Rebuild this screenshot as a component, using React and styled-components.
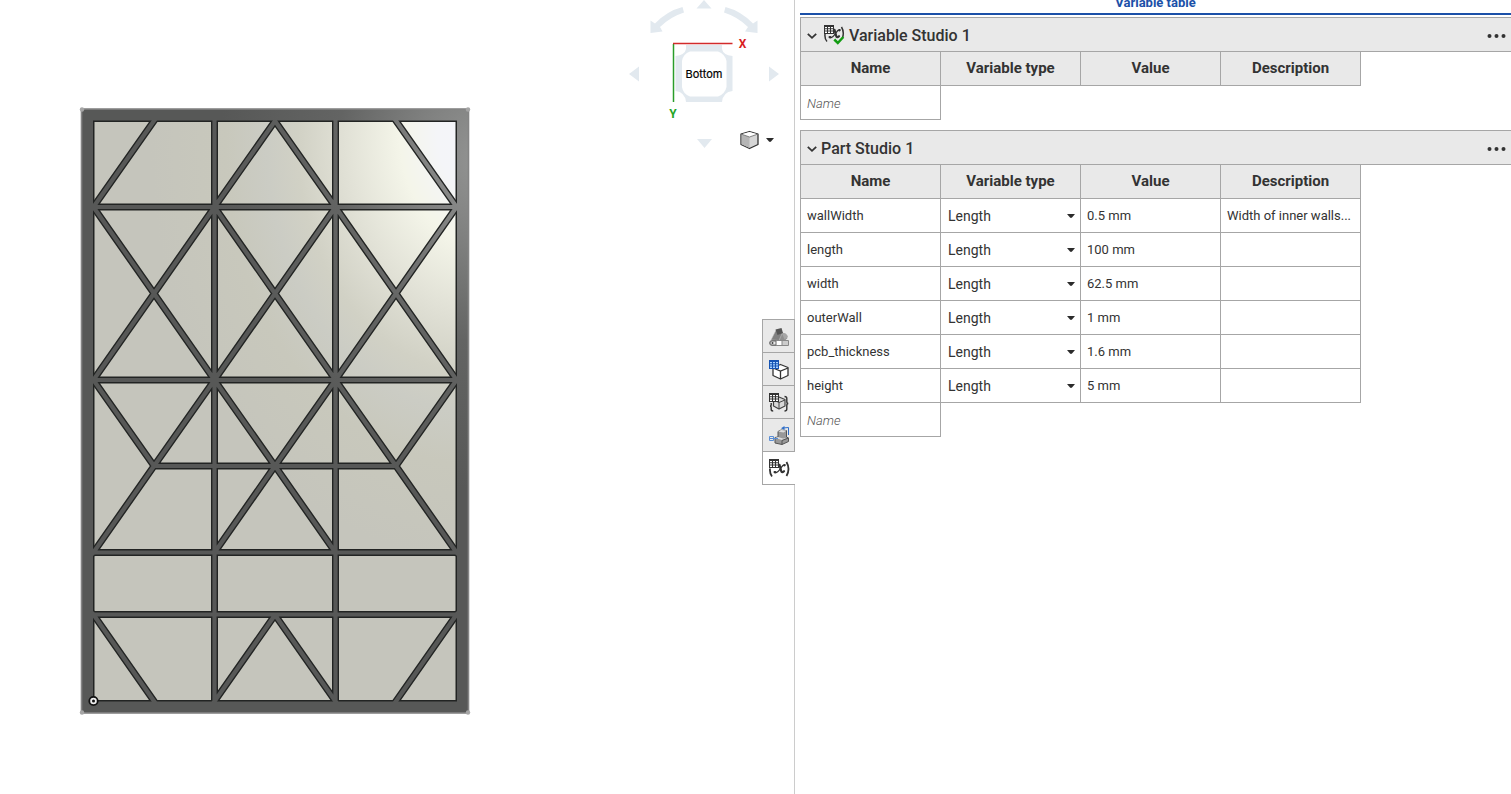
import React from "react";
import styled, { createGlobalStyle } from "styled-components";

const GlobalStyle = createGlobalStyle`
  *, *::before, *::after { box-sizing: border-box; }
  body {
    margin: 0;
    background: #fff;
    color: #333;
    font-family: Roboto, "Liberation Sans", sans-serif;
    font-size: 13px;
  }
  button, input, select { font: inherit; color: inherit; }
`;

const LINE = "#a6a6a6";
const FILL = "#e9e9e9";

const Workspace = styled.div`
  display: grid;
  grid-template-columns: 794fr 717fr;
  min-height: 100vh;
  overflow: hidden;
`;

const Viewport = styled.main`
  display: flex;
  min-width: 0;
`;

const Stage = styled.div`
  flex: 1;
  min-width: 0;
  padding: 106px 0 0 79px;
  overflow: hidden;
`;

const SideTools = styled.div`
  display: flex;
  flex-direction: column;
  flex: none;
  width: 166px;
`;

const Drawing = styled.svg`
  display: block;
  flex: none;
`;

const ViewControls = styled.div`
  display: flex;
  align-items: center;
  gap: 28px;
  height: 22px;
  padding-left: 69px;
`;

const PlainButton = styled.button`
  display: flex;
  align-items: center;
  gap: 7px;
  padding: 0;
  border: 0;
  background: none;
  cursor: pointer;
`;

const TabRail = styled.nav`
  display: flex;
  flex-direction: column;
  align-self: flex-end;
  width: 33px;
  margin: 168px -1px 0 0;
  border: 1px solid ${LINE};
  border-right: 0;
  z-index: 1;
`;

const TabButton = styled.button`
  display: flex;
  align-items: center;
  justify-content: center;
  height: ${(p) => (p.$active ? "32px" : "33px")};
  padding: 0;
  border: 0;
  border-bottom: ${(p) => (p.$active ? "0" : `1px solid ${LINE}`)};
  border-right: ${(p) => (p.$active ? "0" : `1px solid ${LINE}`)};
  background: ${(p) => (p.$active ? "#fff" : FILL)};
  cursor: pointer;
`;

const Panel = styled.aside`
  min-width: 0;
  padding-left: 5px;
  border-left: 1px solid #ccc;
`;

const PanelTitle = styled.h1`
  display: flex;
  align-items: flex-end;
  justify-content: center;
  height: 15px;
  margin: 0 0 2px;
  padding-bottom: 2px;
  border-bottom: 2px solid #1b50a8;
  color: #1b50a8;
  font-size: 13px;
  font-weight: 700;
  line-height: 16px;
`;

const Section = styled.section`
  margin-bottom: 10px;
`;

const SectionBar = styled.header`
  display: flex;
  align-items: center;
  height: 35px;
  padding: 0 5px 0 6px;
  border: 1px solid ${LINE};
  border-right: 0;
  background: ${FILL};
`;

const SectionName = styled.h2`
  flex: 1;
  display: flex;
  align-items: center;
  gap: 4px;
  margin: 0 0 0 ${(p) => (p.$icon ? "6px" : "4px")};
  padding-top: 2px;
  font-size: 16px;
  font-weight: 500;
  line-height: 20px;
`;

const VariableTable = styled.table`
  width: 561px;
  table-layout: fixed;
  border-collapse: separate;
  border-spacing: 0;
`;

const Column = styled.col`
  width: ${(p) => (p.$first ? "141px" : "140px")};
`;

const HeadCell = styled.th`
  height: 34px;
  padding: 0 0 2px;
  border: solid ${LINE};
  border-width: 0 1px 1px 0;
  background: ${FILL};
  font-size: 15px;
  font-weight: 700;
  line-height: 18px;
  &:first-child { border-left-width: 1px; }
`;

const Cell = styled.td`
  height: 34px;
  padding: 0 6px;
  border: solid ${LINE};
  border-width: 0 1px 1px 0;
  white-space: nowrap;
  &:first-child { border-left-width: 1px; }
`;

const NameInput = styled.input`
  display: block;
  width: 100%;
  height: 32px;
  padding: 2px 0 0;
  border: 0;
  outline: 0;
  background: none;
  &::placeholder { color: #555; font-style: italic; font-weight: 300; opacity: 1; }
`;

const TypeField = styled.label`
  display: flex;
  align-items: center;
  height: 33px;
  padding: 1px 0 0 1px;
  margin-right: -1px;
`;

const TypeSelect = styled.select`
  flex: 1;
  min-width: 0;
  height: 30px;
  padding: 0;
  border: 0;
  outline: 0;
  appearance: none;
  background: none;
  font-size: 14px;
`;

const toPath = (lines) =>
  lines.map((points) => "M" + points.map((p) => p.join(" ")).join("L")).join("");

const RIBS = toPath([
  [[214.5, 117], [214.5, 705]],
  [[335.5, 117], [335.5, 705]],
  [[90, 207], [460, 207]],
  [[90, 380], [460, 380]],
  [[154, 466], [396, 466]],
  [[90, 552.5], [460, 552.5]],
  [[90, 614.5], [460, 614.5]],
  [[156, 118], [92, 209]],
  [[394, 118], [458, 209]],
  [[214.5, 207], [275, 121], [335.5, 207]],
  [[92, 205], [154, 293.5], [214.5, 380]],
  [[214.5, 207], [154, 293.5], [92, 382]],
  [[214.5, 207], [275, 293.5], [335.5, 380]],
  [[335.5, 207], [275, 293.5], [214.5, 380]],
  [[335.5, 207], [396, 293.5], [458, 382]],
  [[458, 205], [396, 293.5], [335.5, 380]],
  [[92, 378], [154, 466], [214.5, 380]],
  [[214.5, 380], [275, 466], [335.5, 380]],
  [[335.5, 380], [396, 466], [458, 378]],
  [[154, 466], [92, 554.5]],
  [[214.5, 552.5], [275, 466], [335.5, 552.5]],
  [[396, 466], [458, 554.5]],
  [[92, 612.5], [156, 704]],
  [[213, 703.5], [275, 615], [337, 703.5]],
  [[458, 612.5], [394, 704]],
]);

function EnclosureModel() {
  return (
    <Drawing width="392" height="610" viewBox="79 106 392 610" role="img" aria-label="Part viewed from the bottom">
      <defs>
        <radialGradient id="floor" gradientUnits="userSpaceOnUse" cx="0" cy="0" r="1"
          gradientTransform="translate(492 130) rotate(6) scale(340 430)">
          <stop offset="0" stopColor="#f4f5fb" />
          <stop offset="0.16" stopColor="#f4f5f8" />
          <stop offset="0.27" stopColor="#f4f5e9" />
          <stop offset="0.44" stopColor="#e0e0d5" />
          <stop offset="0.57" stopColor="#d1d1c5" />
          <stop offset="0.66" stopColor="#cbccc4" />
          <stop offset="0.78" stopColor="#c8c8bc" />
          <stop offset="1" stopColor="#c5c5bc" />
        </radialGradient>
        <radialGradient id="wall" gradientUnits="userSpaceOnUse" cx="0" cy="0" r="1"
          gradientTransform="translate(480 160) scale(260 330)">
          <stop offset="0" stopColor="#939493" />
          <stop offset="0.25" stopColor="#7f807f" />
          <stop offset="0.55" stopColor="#636463" />
          <stop offset="1" stopColor="#575857" />
        </radialGradient>
      </defs>
      <rect x="93.5" y="121" width="363" height="580" fill="url(#floor)" />
      <path d={RIBS} fill="none" stroke="#222423" strokeWidth="7" strokeLinejoin="bevel" />
      <rect x="93.5" y="121" width="363" height="580" fill="none" stroke="#222423" strokeWidth="2" />
      <path d="M82 109H468V713H82ZM93 120.500V701.500H457V120.500Z" fill="url(#wall)" fillRule="evenodd" />
      <path d={RIBS} fill="none" stroke="url(#wall)" strokeWidth="4.200" strokeLinejoin="bevel" />
      <rect x="81.500" y="109" width="387" height="604" fill="none" stroke="#858585" strokeWidth="1.600" />
      <g fill="#a5a5a5">
        <circle cx="82" cy="109.500" r="2.200" />
        <circle cx="468" cy="109.500" r="2.200" />
        <circle cx="82" cy="712.500" r="2.200" />
        <circle cx="468" cy="712.500" r="2.200" />
      </g>
      <circle cx="93.500" cy="701" r="4.200" fill="#eee" stroke="#111" strokeWidth="1.800" />
      <circle cx="93.500" cy="701" r="1.500" fill="#111" />
    </Drawing>
  );
}

function ViewCube() {
  return (
    <Drawing width="166" height="129" viewBox="628 0 166 129" role="img" aria-label="View orientation">
      <g fill="#e2e9ef">
        <path d="M704 0L711.500 8.500H696.500Z" />
        <path d="M629 74L639 66.500V81.500Z" />
        <path d="M779 74L769 66.500V81.500Z" />
        <path d="M682.500 7L684 12.500Q670 17 660 27L662.500 31.500L650.500 33V20.500L655 23.500Q667 11 682.500 7Z" />
        <path d="M725.500 7L724 12.500Q738 17 748 27L745 31.500L757.500 33V20.500L753 23.500Q741 11 725.500 7Z" />
        <path d="M686 45H722V49Q723 55 732.500 56V91Q723 92 722 102H686Q685 92 675.500 91V56Q685 55 686 49Z" />
      </g>
      <path d="M690 51.500H718Q725 54 726.500 61V87Q725 94 718 96.500H690Q683 94 682 87V61Q683 54 690 51.500Z" fill="#fff" />
      <path d="M673.500 102V44" stroke="#2a9d2a" strokeWidth="1.500" fill="none" />
      <path d="M673 43.500H732.500" stroke="#d22b2b" strokeWidth="1.500" fill="none" />
      <text x="704" y="78" textAnchor="middle" fontFamily="Inter, sans-serif" fontSize="11" fill="#000" stroke="#000" strokeWidth="0.200">Bottom</text>
      <text x="742.500" y="48" textAnchor="middle" fontFamily="Roboto, sans-serif" fontSize="12" fontWeight="700" fill="#d81e1e">X</text>
      <text x="673" y="118" textAnchor="middle" fontFamily="Roboto, sans-serif" fontSize="12" fontWeight="700" fill="#25a525">Y</text>
    </Drawing>
  );
}

const Caret = () => (
  <Drawing width="8" height="5" viewBox="0 0 8 5" aria-hidden="true">
    <path d="M0 0H8L5 3.500Q4 4.300 3 3.500Z" fill="#2b2b2b" />
  </Drawing>
);

const Chevron = () => (
  <Drawing width="10" height="10" viewBox="0 0 10 10" aria-hidden="true">
    <path d="M0.800 3.800L5 7.800L9.200 3.800" fill="none" stroke="#333" strokeWidth="1.800" />
  </Drawing>
);

const MiniGrid = ({ x, y, color = "#333", cell = "#fff" }) => (
  <g transform={`translate(${x} ${y})`}>
    <rect width="10" height="9" fill={color} />
    <path d="M1 2H3V3.300H1ZM4 2H6V3.300H4ZM7 2H9V3.300H7ZM1 4.300H3V5.600H1ZM4 4.300H6V5.600H4ZM7 4.300H9V5.600H7ZM1 6.600H3V8H1ZM4 6.600H6V8H4ZM7 6.600H9V8H7Z" fill={cell} />
  </g>
);

const CurlyX = () => (
  <g fill="none" stroke="#333" strokeLinecap="round">
    <path d="M12.500 8.800L14.200 15Q14.800 17.200 17 15.200" strokeWidth="2.200" />
    <path d="M17.800 8.800Q16 8.500 13.800 12Q10.500 17.500 7.500 16.600" strokeWidth="1.400" />
    <path d="M17.300 9.300H17.600M7.600 16H8.200" strokeWidth="2.200" />
  </g>
);

const AppearanceIcon = () => (
  <Drawing width="24" height="24" viewBox="0 0 24 24" aria-hidden="true">
    <path d="M4 16L15.500 8L20.500 14L18 16.500Z" fill="#8f8f8f" />
    <path d="M15 9.500Q19 7.500 21 13L17.500 15.500Z" fill="#a6a6a6" />
    <path d="M4 16L9 6L15.500 8.500L12 16.500Z" fill="#808080" stroke="#ccc" strokeWidth="0.500" />
    <path d="M8.500 5.500L14.500 4L16 9L10.500 11Z" fill="#555" />
    <path d="M5 16.500H21.500V21.500H5Q2.500 21.500 2.500 19Q2.500 16.500 5 16.500Z" fill="#fff" stroke="#888" />
    <path d="M15 17H21V21H15Z" fill="#ccc" />
    <path d="M9 17V21H5Q3 21 3 19Q3 17 5 17Z" fill="#e9e9e9" stroke="#666" />
    <circle cx="5.500" cy="19" r="1" fill="#444" />
    <path d="M15 16.500V21.500" stroke="#888" />
  </Drawing>
);

const ConfigurationIcon = () => (
  <Drawing width="24" height="24" viewBox="0 0 24 24" aria-hidden="true">
    <path d="M13.500 7.500L21 10.500V18.500L13.500 22L6 18.500V10.500Z" fill="#fff" stroke="#333" strokeWidth="1.300" strokeLinejoin="round" />
    <path d="M6 11L13.500 14L21 11M13.500 14V22" fill="none" stroke="#333" strokeWidth="1.300" />
    <MiniGrid x={2} y={3} color="#1554b4" cell="#a9d3ff" />
  </Drawing>
);

const CustomTableIcon = () => (
  <Drawing width="24" height="24" viewBox="0 0 24 24" aria-hidden="true">
    <path d="M12 7L18 9.500V16L12 19L6.500 16V9.500Z" fill="#d8d8d8" stroke="#444" strokeWidth="1.200" strokeLinejoin="round" />
    <path d="M6.500 10L12 12.500L18 10M12 12.500V19" fill="none" stroke="#444" />
    <MiniGrid x={2} y={3} />
    <path d="M4.200 13V15Q4.200 16 3 16Q4.200 16 4.200 17.500V19.500Q4.200 21 6.200 21" fill="none" stroke="#333" strokeWidth="1.400" />
    <path d="M17.500 6.500Q19.800 6.500 19.800 8.500V11.500Q19.800 13.500 21.300 13.500Q19.800 13.500 19.800 15.500V19Q19.800 21 17.500 21" fill="none" stroke="#333" strokeWidth="1.400" />
  </Drawing>
);

const MateIcon = () => (
  <Drawing width="24" height="24" viewBox="0 0 24 24" aria-hidden="true">
    <path d="M8 14.500L11 14V8.500L14 7L19.500 7.500V14L21.500 15V18.500L15 21.500L8 20Z" fill="#999" stroke="#555" strokeLinejoin="round" />
    <path d="M11 8.500L14 7L19.500 7.500L16.500 9.500ZM8 15L11 14L16 15.500L20.500 15L15 17Z" fill="#ddd" />
    <path d="M15 17.500V21.500M15 17.500L21.500 15" fill="none" stroke="#555" />
    <path d="M2.500 13.500H6.500V17.500H2.500ZM2.500 15.500H11" fill="none" stroke="#5b8fd6" />
    <path d="M16 5L21.500 4.500V12" fill="none" stroke="#2f6fc9" />
    <path d="M14 5.200L17.500 3V7Z" fill="#2f6fc9" />
  </Drawing>
);

const VariableIcon = () => (
  <Drawing width="24" height="24" viewBox="0 0 24 24" aria-hidden="true">
    <MiniGrid x={2} y={3} />
    <CurlyX />
    <path d="M3 12.500Q2.500 17.500 5 20.500M19.500 6Q23.500 13 19.500 20" fill="none" stroke="#333" strokeWidth="1.800" />
  </Drawing>
);

const VariableStudioIcon = () => (
  <Drawing width="22" height="24" viewBox="1 3 22 24" aria-hidden="true">
    <MiniGrid x={2} y={4} />
    <CurlyX />
    <path d="M3 13Q2.500 18 5 20.500M19.500 6Q22.500 11 20.500 17" fill="none" stroke="#333" strokeWidth="1.500" />
    <path d="M12.300 18.500L15.800 22L21.300 16" fill="none" stroke="#129c12" strokeWidth="2.500" />
  </Drawing>
);

const MoreIcon = () => (
  <Drawing width="20" height="6" viewBox="0 0 20 6" aria-hidden="true">
    <g fill="#333">
      <circle cx="3.500" cy="4" r="2" />
      <circle cx="10.500" cy="4" r="2" />
      <circle cx="17.500" cy="4" r="2" />
    </g>
  </Drawing>
);

const IsoCube = () => (
  <Drawing width="19" height="20" viewBox="0 0 19 20" aria-hidden="true">
    <path d="M9.500 1.500L18 4V14.500L9.500 18.500L1 14.500V4Z" fill="#d6d6d6" stroke="#333" strokeWidth="1.300" strokeLinejoin="round" />
    <path d="M1.500 4.200L9.500 7V18L1.500 14.300Z" fill="#b5b5b5" />
    <path d="M1.500 4.200L9.500 2L17.500 4.200L9.500 7Z" fill="#fff" />
    <path d="M1 4L9.500 7L18 4" fill="none" stroke="#666" strokeWidth="0.800" />
  </Drawing>
);

const TABS = [
  ["Appearance", AppearanceIcon],
  ["Configurations", ConfigurationIcon],
  ["Custom tables", CustomTableIcon],
  ["Exploded views", MateIcon],
  ["Variable table", VariableIcon],
];

const COLUMNS = ["Name", "Variable type", "Value", "Description"];

const PART_VARIABLES = [
  { name: "wallWidth", value: "0.5 mm", description: "Width of inner walls..." },
  { name: "length", value: "100 mm" },
  { name: "width", value: "62.5 mm" },
  { name: "outerWall", value: "1 mm" },
  { name: "pcb_thickness", value: "1.6 mm" },
  { name: "height", value: "5 mm" },
];

function VariableSection({ title, icon, rows }) {
  return (
    <Section>
      <SectionBar>
        <PlainButton type="button" aria-label={`Collapse ${title}`}>
          <Chevron />
        </PlainButton>
        <SectionName $icon={Boolean(icon)}>
          {icon}
          {title}
        </SectionName>
        <PlainButton type="button" aria-label={`${title} options`}>
          <MoreIcon />
        </PlainButton>
      </SectionBar>
      <VariableTable>
        <colgroup>
          {COLUMNS.map((name, i) => <Column key={name} $first={i === 0} />)}
        </colgroup>
        <thead>
          <tr>
            {COLUMNS.map((name) => <HeadCell key={name} scope="col">{name}</HeadCell>)}
          </tr>
        </thead>
        <tbody>
          {rows.map((row) => (
            <tr key={row.name}>
              <Cell>{row.name}</Cell>
              <Cell>
                <TypeField>
                  <TypeSelect aria-label={`${row.name} type`} defaultValue="Length">
                    <option>Length</option>
                  </TypeSelect>
                  <Caret />
                </TypeField>
              </Cell>
              <Cell>{row.value}</Cell>
              <Cell>{row.description}</Cell>
            </tr>
          ))}
          <tr>
            <Cell>
              <NameInput type="text" placeholder="Name" aria-label={`New variable in ${title}`} />
            </Cell>
          </tr>
        </tbody>
      </VariableTable>
    </Section>
  );
}

export default function App() {
  return (
    <>
      <GlobalStyle />
      <Workspace>
        <Viewport>
          <Stage>
            <EnclosureModel />
          </Stage>
          <SideTools>
            <ViewCube />
            <ViewControls>
              <PlainButton type="button" aria-label="Rotate view down">
                <Drawing width="15" height="16" viewBox="0 0 15 16" aria-hidden="true">
                  <path d="M0 7H15L7.500 16Z" fill="#e2e9ef" />
                </Drawing>
              </PlainButton>
              <PlainButton type="button" aria-label="View options">
                <IsoCube />
                <Caret />
              </PlainButton>
            </ViewControls>
            <TabRail aria-label="Panels">
              {TABS.map(([label, Icon]) => (
                <TabButton key={label} type="button" aria-label={label} $active={label === "Variable table"}>
                  <Icon />
                </TabButton>
              ))}
            </TabRail>
          </SideTools>
        </Viewport>
        <Panel>
          <PanelTitle>Variable table</PanelTitle>
          <VariableSection title="Variable Studio 1" icon={<VariableStudioIcon />} rows={[]} />
          <VariableSection title="Part Studio 1" rows={PART_VARIABLES} />
        </Panel>
      </Workspace>
    </>
  );
}
